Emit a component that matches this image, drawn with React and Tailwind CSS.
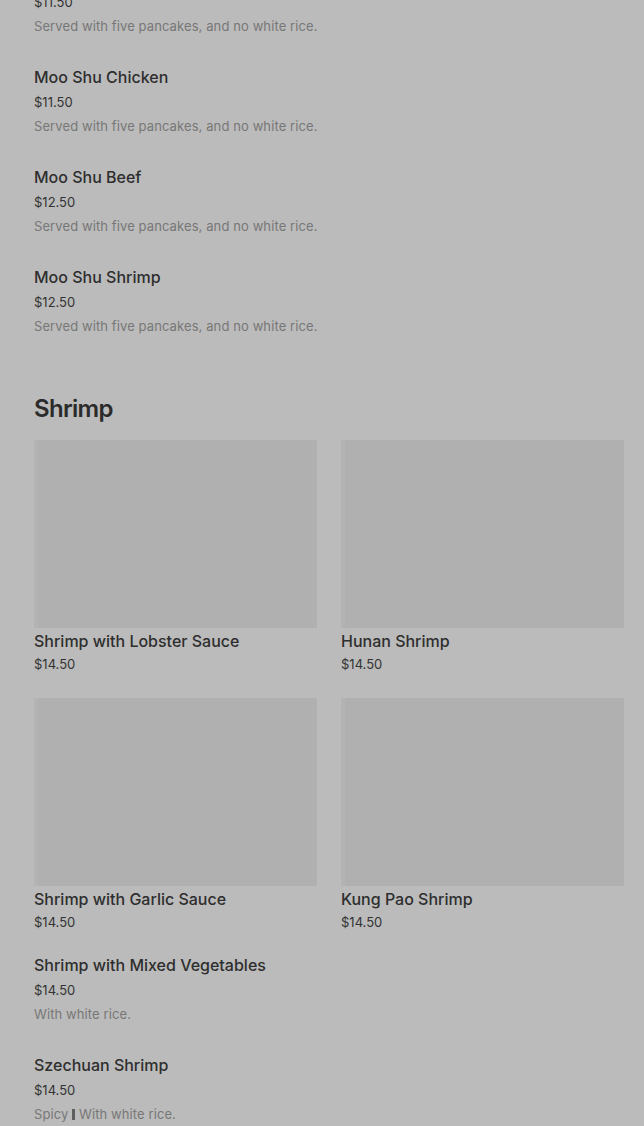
import React from "react";

const mooShu = [
  { name: "Moo Shu Chicken", price: "$11.50", desc: "Served with five pancakes, and no white rice." },
  { name: "Moo Shu Beef", price: "$12.50", desc: "Served with five pancakes, and no white rice." },
  { name: "Moo Shu Shrimp", price: "$12.50", desc: "Served with five pancakes, and no white rice." },
];

const shrimpCards = [
  { name: "Shrimp with Lobster Sauce", price: "$14.50" },
  { name: "Hunan Shrimp", price: "$14.50" },
  { name: "Shrimp with Garlic Sauce", price: "$14.50" },
  { name: "Kung Pao Shrimp", price: "$14.50" },
];

const shrimpList = [
  { name: "Shrimp with Mixed Vegetables", price: "$14.50", desc: "With white rice." },
  { name: "Szechuan Shrimp", price: "$14.50", desc: "With white rice.", spicy: true },
];

const ListItem = ({ item }) => (
  <div className="pb-[29px]">
    <div className="text-[16px] leading-6 font-medium text-[#2e2e2e]">{item.name}</div>
    <div className="mt-[3px] text-[13px] leading-5 text-[#333333]">{item.price}</div>
    <div className="mt-1 text-[13px] leading-5 tracking-[0.1px] text-[#777777]">
      {item.spicy && (
        <>
          Spicy{" "}
          <span className="inline-block w-[3px] h-[11px] bg-[#5e5e5e] align-[-1px]" />{" "}
        </>
      )}
      {item.desc}
    </div>
  </div>
);

const Card = ({ item }) => (
  <div>
    <div className="h-[188px] bg-[#b0b0b0] border-l-4 border-[#b3b3b3]" />
    <div className="mt-[1px] text-[16px] leading-6 font-medium text-[#2e2e2e]">{item.name}</div>
    <div className="mt-[1px] text-[13px] leading-5 text-[#333333]">{item.price}</div>
  </div>
);

const App = () => {
  return (
    <div
      className="h-[1126px] overflow-hidden bg-[#bbbbbb] pl-[34px] pr-5"
      style={{ fontFamily: "Inter, 'Noto Sans', sans-serif" }}
    >
      <div className="-mt-[8px] pb-[29px]">
        <div className="text-[13px] leading-5 text-[#333333]">$11.50</div>
        <div className="mt-1 text-[13px] leading-5 tracking-[0.1px] text-[#777777]">
          Served with five pancakes, and no white rice.
        </div>
      </div>
      <div>
        {mooShu.map((item) => (
          <ListItem key={item.name} item={item} />
        ))}
      </div>
      <h2 className="mt-[28px] text-[24px] leading-8 font-semibold tracking-[-0.7px] text-[#2b2b2b]">
        Shrimp
      </h2>
      <div className="mt-[15px] grid grid-cols-2 gap-x-6 gap-y-6">
        {shrimpCards.map((item) => (
          <Card key={item.name} item={item} />
        ))}
      </div>
      <div className="mt-[21px]">
        {shrimpList.map((item) => (
          <ListItem key={item.name} item={item} />
        ))}
      </div>
    </div>
  );
};

export default App;
